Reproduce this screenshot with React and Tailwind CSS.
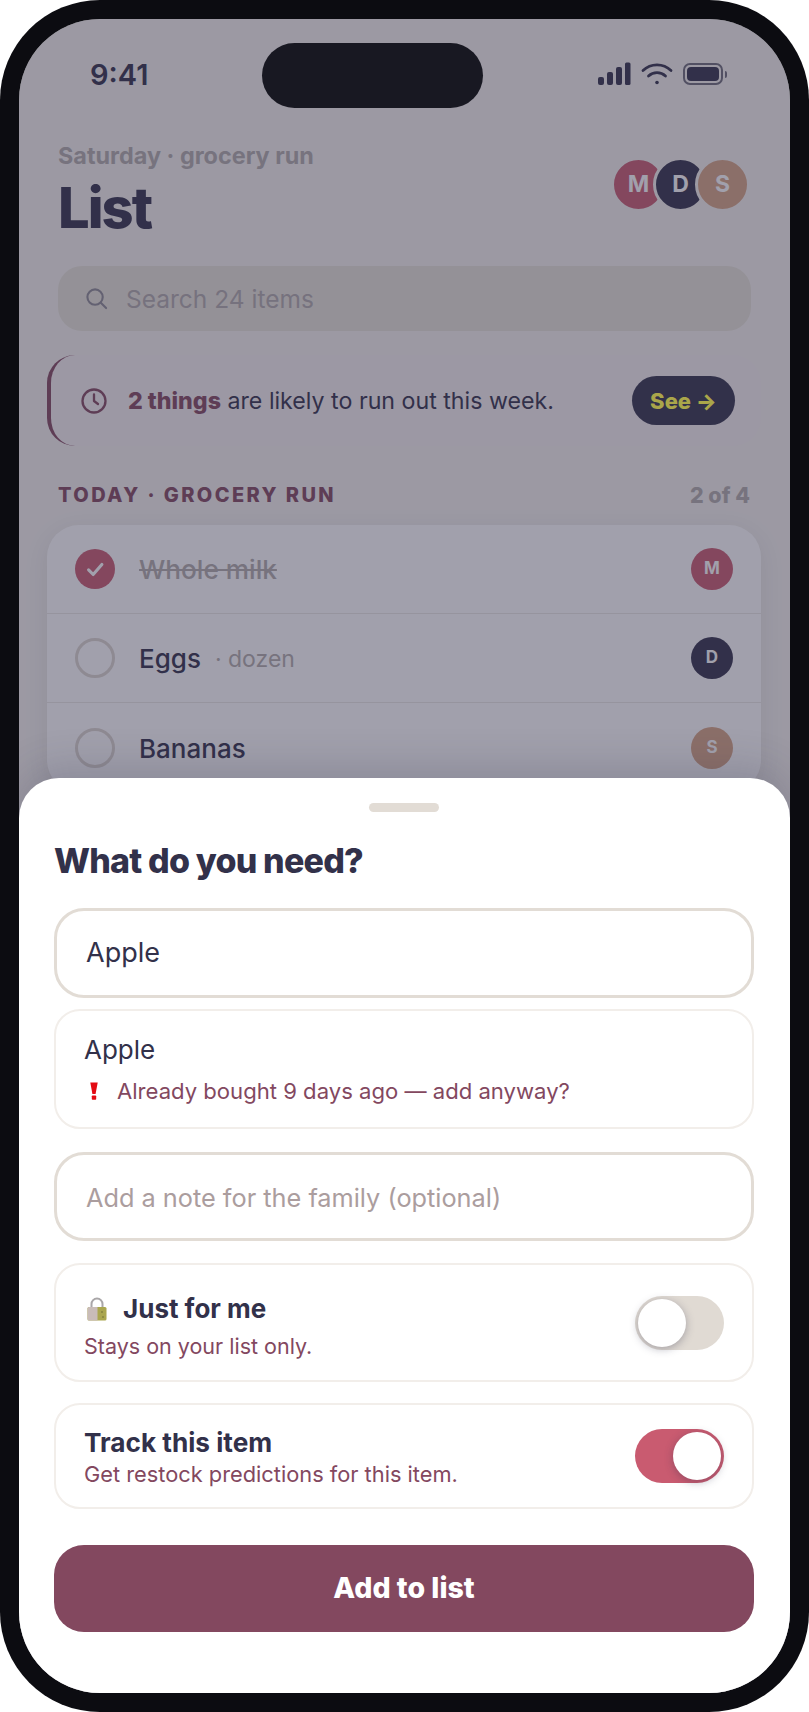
const F = "font-['Inter',sans-serif]";

function Signal() {
  return (
    <svg width="34" height="24" viewBox="0 0 34 24" className="text-[#32314a]" fill="currentColor">
      <rect x="1" y="15" width="6" height="8" rx="2" />
      <rect x="10" y="10" width="6" height="13" rx="2" />
      <rect x="19" y="5" width="6" height="18" rx="2" />
      <rect x="28" y="0.500" width="5.500" height="22.500" rx="1.500" />
    </svg>
  );
}
function Wifi() {
  return (
    <svg width="32" height="24" viewBox="0 0 32 24" fill="none" stroke="#32314a" strokeWidth="2.800" strokeLinecap="round">
      <path d="M2 8.500C9.800 1 22.200 1 30 8.500" />
      <path d="M7.500 14C12.300 9.500 19.700 9.500 24.500 14" />
      <circle cx="16" cy="20.500" r="1.800" fill="#32314a" stroke="none" />
    </svg>
  );
}
function Battery() {
  return (
    <div className="flex items-center gap-[2px]">
      <div className="w-[40px] h-[22px] rounded-[7px] border-2 border-[#6d6c78] p-[2px]">
        <div className="w-full h-full rounded-[4px] bg-[#32314a]" />
      </div>
      <div className="w-[2px] h-[7px] rounded-r-full bg-[#6d6c78]" />
    </div>
  );
}
function Check({ size }) {
  return (
    <svg width={size} height={size} viewBox="0 0 24 24" fill="none" stroke="#fff" strokeWidth="3.400" strokeLinecap="round" strokeLinejoin="round">
      <path d="M5 13l5 5L19.500 7" />
    </svg>
  );
}
function Clock() {
  return (
    <svg width="26" height="26" viewBox="0 0 26 26" fill="none" stroke="#83485f" strokeWidth="2.300" strokeLinecap="round" strokeLinejoin="round">
      <circle cx="13" cy="13" r="11.500" />
      <path d="M13 6.500V13l4 3" />
    </svg>
  );
}
function Search() {
  return (
    <svg width="23" height="23" viewBox="0 0 24 24" fill="none" stroke="#8d8b94" strokeWidth="2.200" strokeLinecap="round">
      <circle cx="10.500" cy="10.500" r="8" />
      <path d="M16.500 16.500L22 22" />
    </svg>
  );
}
function Lock() {
  return (
    <svg width="20" height="24" viewBox="0 0 20 24">
      <path d="M4.500 11V7a5.500 5.500 0 0 1 11 0v4" fill="none" stroke="#a9a6a8" strokeWidth="2" />
      <rect x="0.500" y="10" width="19" height="13.500" rx="1.500" fill="#aaa64f" />
      <path d="M2 10h8.500v13.500H2a1.500 1.500 0 0 1-1.500-1.500V11.500A1.500 1.500 0 0 1 2 10z" fill="#c9bcb8" />
      <circle cx="15" cy="15" r="0.800" fill="#6b6a33" />
      <circle cx="16" cy="20" r="0.800" fill="#6b6a33" />
    </svg>
  );
}
function Bang() {
  return (
    <svg width="8" height="18" viewBox="0 0 8 18" fill="#e30b13">
      <path d="M0.300 0.500h7.400L5.600 12H2.400z" />
      <rect x="1.800" y="13.500" width="4.400" height="4.300" rx="0.800" />
    </svg>
  );
}
function Row({ children, who, bg, last }) {
  return (
    <div className={`h-[89px] flex items-center pl-[28px] pr-[28px] ${last ? "" : "border-b border-[#ebe9e6]"}`}>
      {children}
      <div className={`ml-auto w-[42px] h-[42px] rounded-full flex items-center justify-center text-[17px] font-bold text-white ${bg}`}>{who}</div>
    </div>
  );
}
function Ring() {
  return <div className="w-[40px] h-[40px] rounded-full border-[3px] border-[#dcd6d0]" />;
}

export default function App() {
  return (
    <div className={`${F} w-[809px] h-[1712px] bg-white`}>
      <div className="w-full h-full rounded-[100px] bg-[#0c0c11] p-[19px]">
        <div className="relative w-full h-full rounded-[81px] overflow-hidden bg-[#f5f3ef] px-[39px]">
          <div className="h-[110px] flex items-center justify-between pl-[32px] pr-[24px]">
            <span className="text-[29px] font-semibold text-[#32314a] leading-none">9:41</span>
            <div className="flex items-center gap-[10px]">
              <Signal />
              <Wifi />
              <Battery />
            </div>
          </div>

          <div className="mt-[14px] flex items-center justify-between">
            <div>
              <div className="-mt-[1px] pb-[1px] text-[23.400px] leading-[28px] font-bold text-[#b2adab]">Saturday · grocery run</div>
              <div className="mt-[7px] text-[56px] leading-[60px] font-extrabold tracking-[-2px] text-[#32314a]">List</div>
            </div>
            <div className="flex -mt-[12px] -mr-[-1px]">
              <div className="w-[55px] h-[55px] rounded-full border-[3px] border-[#f5f3ef] bg-[#c95b70] flex items-center justify-center text-[23px] font-bold text-white">M</div>
              <div className="relative -ml-[13px] w-[55px] h-[55px] rounded-full border-[3px] border-[#f5f3ef] bg-[#32314a] flex items-center justify-center text-[23px] font-bold text-white">D</div>
              <div className="relative -ml-[13px] w-[55px] h-[55px] rounded-full border-[3px] border-[#f5f3ef] bg-[#d7a483] flex items-center justify-center text-[23px] font-bold text-white">S</div>
            </div>
          </div>

          <div className="mt-[28px] h-[65px] rounded-[24px] bg-[#e8e4d8] flex items-center pl-[27px] gap-[18px]">
            <Search />
            <span className="pt-[1px] text-[24.500px] text-[#b0aaab]">Search 24 items</span>
          </div>

          <div className="mt-[24px] -ml-[11px] -mr-[10px] h-[91px] rounded-[28px] bg-[#f6f0f0] border-l-[4px] border-[#83485f] flex items-center pl-[30px] pr-[25px]">
            <Clock />
            <span className="ml-[21px] pt-[2px] text-[23.200px] text-[#32314a]">
              <span className="font-extrabold text-[#83485f]">2 things</span> are likely to run out this week.
            </span>
          </div>

          <div className="mt-[35px] h-[28px] flex items-center justify-between">
            <span className="text-[20px] font-extrabold tracking-[2.400px] text-[#83485f]">TODAY · GROCERY RUN</span>
            <span className="text-[21.500px] font-extrabold text-[#b2adab] mr-[1px]">2 of 4</span>
          </div>

          <div className="mt-[16px] -ml-[11px] -mr-[10px] rounded-[32px] bg-white shadow-[0_6px_24px_rgba(50,49,74,0.1)]">
            <Row who="M" bg="bg-[#c95b70]">
              <div className="w-[40px] h-[40px] rounded-full bg-[#c95b70] flex items-center justify-center"><Check size={22} /></div>
              <span className="ml-[24px] pt-[2px] text-[26.200px] font-medium text-[#b2adab] line-through">Whole milk</span>
            </Row>
            <Row who="D" bg="bg-[#32314a]">
              <Ring />
              <span className="ml-[24px] text-[26px] font-medium text-[#32314a]">Eggs</span>
              <span className="ml-[14px] pt-[2px] text-[23px] text-[#b2adab]">· dozen</span>
            </Row>
            <Row who="S" bg="bg-[#d7a483]" last>
              <Ring />
              <span className="ml-[24px] pt-[1px] text-[26px] font-medium text-[#32314a]">Bananas</span>
            </Row>
          </div>

          {/* dim layer */}
          <div className="absolute inset-0 bg-[rgba(50,49,74,0.46)]" />

          {/* dynamic island and the See pill sit above the dim layer's tone */}
          <div className="absolute top-[24px] left-[243px] w-[221px] h-[65px] rounded-full bg-[#181822]" />
          <div className="absolute top-[357px] left-[613px] w-[103px] h-[49px] rounded-full bg-[#32314a] pt-[1px] flex items-center justify-center text-[22px] font-extrabold text-[#aaa64a]">See →</div>

          {/* bottom sheet */}
          <div className="absolute inset-x-0 bottom-0 h-[915px] rounded-t-[40px] bg-white pl-[35px] pr-[36px] pt-[25px] shadow-[0_-10px_40px_rgba(50,49,74,0.2)]">
            <div className="mx-auto w-[70px] h-[9px] rounded-full bg-[#e2dcd5]" />
            <div className="mt-[29px] text-[34px] leading-[40px] font-extrabold tracking-[-0.800px] text-[#32314a]">What do you need?</div>

            <div className="mt-[27px] h-[90px] rounded-[30px] border-[3px] border-[#e2dcd5] flex items-center pl-[29px] pt-[1px] text-[27px] text-[#32314a]">Apple</div>

            <div className="mt-[11px] h-[120px] rounded-[26px] border-2 border-[#f2eeea] pl-[28px] pt-[22px]">
              <div className="text-[26px] leading-[34px] text-[#32314a]">Apple</div>
              <div className="mt-[10px] flex items-center text-[22.100px] leading-[28px] text-[#83485f]">
                <span className="ml-[6px] mr-[11px] flex"><Bang /></span>
                <span className="ml-[8px]">Already bought 9 days ago — add anyway?</span>
              </div>
            </div>

            <div className="mt-[23px] h-[89px] rounded-[30px] border-[3px] border-[#e2dcd5] flex items-center pl-[29px] pt-[3px] text-[25.300px] text-[#ab9d9e]">Add a note for the family (optional)</div>

            <div className="mt-[22px] h-[119px] rounded-[26px] border-2 border-[#f2eeea] pl-[28px] pr-[28px] flex items-center justify-between">
              <div className="pt-[7px]">
                <div className="flex items-center text-[26px] leading-[32px] font-bold text-[#32314a]">
                  <span className="ml-[3px] flex"><Lock /></span>
                  <span className="ml-[16px]">Just for me</span>
                </div>
                <div className="mt-[7px] text-[21.500px] leading-[28px] text-[#83485f]">Stays on your list only.</div>
              </div>
              <div className="w-[89px] h-[54px] rounded-full bg-[#e0dad3] p-[3px] flex justify-start">
                <div className="w-[48px] h-[48px] rounded-full bg-white shadow-[0_2px_8px_rgba(50,49,74,0.35)]" />
              </div>
            </div>

            <div className="mt-[21px] h-[106px] rounded-[26px] border-2 border-[#f2eeea] pl-[28px] pr-[28px] flex items-center justify-between">
              <div className="pt-[2px]">
                <div className="text-[26.200px] leading-[32px] font-bold text-[#32314a]">Track this item</div>
                <div className="mt-[1px] text-[21.800px] leading-[28px] text-[#83485f]">Get restock predictions for this item.</div>
              </div>
              <div className="w-[89px] h-[54px] rounded-full bg-[#c95b70] p-[3px] flex justify-end">
                <div className="w-[48px] h-[48px] rounded-full bg-white shadow-[0_2px_8px_rgba(50,49,74,0.35)]" />
              </div>
            </div>

            <div className="mt-[36px] h-[87px] rounded-[30px] bg-[#83485f] flex items-center justify-center text-[28.500px] font-extrabold text-white">Add to list</div>
          </div>
        </div>
      </div>
    </div>
  );
}
